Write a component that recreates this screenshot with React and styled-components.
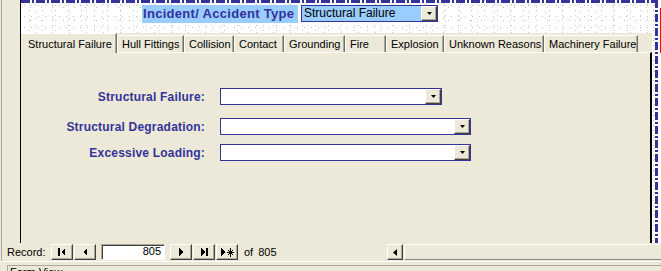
import styled, { createGlobalStyle } from "styled-components";

const BLUE = "#333399";
const FACE = "#ece9d8";

const GlobalStyle = createGlobalStyle`
  html, body { margin: 0; padding: 0; background: ${FACE}; }
  * { box-sizing: border-box; }
`;

// white paper with scattered grey dots (Access form header texture)
const dots = `
  radial-gradient(circle, #c4c4c4 0.7px, transparent 0.9px) 0 0 / 7px 11px,
  radial-gradient(circle, #cacaca 0.7px, transparent 0.9px) 2px 3px / 13px 5px,
  radial-gradient(circle, #bebebe 0.7px, transparent 0.9px) 4px 1px / 11px 13px,
  radial-gradient(circle, #c8c8c8 0.7px, transparent 0.9px) 6px 8px / 17px 7px,
  #fff
`;

const Window = styled.div`
  width: 661px;
  height: 271px;
  overflow: hidden;
  display: flex;
  flex-direction: column;
  background: ${FACE};
  font-family: "Liberation Sans", Arial, sans-serif;
  color: #000;
`;

const Workspace = styled.div`
  height: 261px;
  display: flex;
  flex-direction: column;
  background: linear-gradient(to right, transparent 1px, #aca899 1px 2px, transparent 2px);
`;

const FormRow = styled.div`
  height: 243px;
  display: flex;
  padding-left: 20px;
`;

const Form = styled.div`
  flex: 1;
  display: flex;
  border-left: 1px solid #000;
`;

const FormMain = styled.div`
  width: 634px;
  display: flex;
  flex-direction: column;
  background: ${dots};
`;

const Header = styled.div`
  height: 33px;
  display: flex;
  flex-direction: column;
`;

const DashH = styled.div`
  height: 3px;
  background: repeating-linear-gradient(to right, ${BLUE} 0 9px, transparent 9px 11px, ${BLUE} 11px 13px, transparent 13px 15px);
`;

const HeaderBody = styled.div`
  flex: 1;
  display: flex;
  align-items: flex-start;
  gap: 3px;
  padding: 2px 0 0 121px;
`;

const TypeLabel = styled.div`
  width: 156px;
  height: 18px;
  line-height: 18px;
  padding-left: 1px;
  overflow: hidden;
  background: #99ccff;
  color: ${BLUE};
  font-weight: bold;
  font-size: 13px;
  letter-spacing: 0.3px;
  white-space: nowrap;
`;

const Combo = styled.div`
  width: ${(p) => p.$width}px;
  height: 17px;
  display: flex;
  align-items: stretch;
  border: 1px solid ${BLUE};
  background: ${(p) => p.$bg || "#fff"};
`;

const ComboValue = styled.div`
  flex: 1;
  padding-left: 2px;
  font-size: 12px;
  line-height: 15px;
  white-space: nowrap;
  overflow: hidden;
`;

const DropButton = styled.div`
  width: 16px;
  display: flex;
  align-items: center;
  justify-content: center;
  background: ${FACE};
  border-style: solid;
  border-width: 1px;
  border-color: #fff #404040 #404040 #fff;
  box-shadow: inset -1px -1px #aca899;
`;

const TabArea = styled.div`
  flex: 1;
  display: flex;
  flex-direction: column;
  margin-right: 3px;
  background: ${FACE};
`;

const TabStrip = styled.div`
  height: 19px;
  display: flex;
  align-items: flex-end;
`;

const Tab = styled.div`
  width: ${(p) => p.$width}px;
  height: ${(p) => (p.$active ? 20 : 17)}px;
  margin-bottom: ${(p) => (p.$active ? -1 : 0)}px;
  position: relative;
  z-index: ${(p) => (p.$active ? 1 : 0)};
  display: flex;
  align-items: center;
  padding-left: ${(p) => (p.$active ? 6 : 4)}px;
  background: ${FACE};
  font-size: 11px;
  white-space: nowrap;
  border-top: 1px solid #fff;
  border-left: 1px solid ${(p) => (p.$active ? FACE : "#fff")};
  border-right: 1px solid #716f64;
  box-shadow: inset -1px 0 #aca899;
`;

const Panel = styled.div`
  flex: 1;
  border-top: 1px solid #fff;
  border-right: 2px solid #000;
  padding-top: 35px;
  display: flex;
  flex-direction: column;
`;

const Field = styled.div`
  display: grid;
  grid-template-columns: 184px auto;
  column-gap: 15px;
  align-items: center;
  margin-top: ${(p) => p.$top || 0}px;
`;

const FieldLabel = styled.div`
  text-align: right;
  color: ${BLUE};
  font-weight: bold;
  font-size: 12px;
  letter-spacing: 0.2px;
  white-space: nowrap;
`;

const RightRail = styled.div`
  width: 6px;
  display: flex;
`;

const DashV = styled.div`
  width: 3px;
  background: repeating-linear-gradient(to bottom, ${BLUE} 0 8px, transparent 8px 10px, ${BLUE} 10px 12px, transparent 12px 14px), ${dots};
`;

const RailTail = styled.div`
  width: 3px;
  background: linear-gradient(#f00, #f00) 2px 8px / 1px 45px no-repeat, ${dots};
`;

const RecordBar = styled.div`
  height: 18px;
  display: flex;
  align-items: center;
  padding-left: 7px;
  font-size: 11px;
`;

const RecordLabel = styled.div`
  width: 44px;
`;

const NavGroup = styled.div`
  display: flex;
  align-items: center;
  gap: 1px;
`;

const NavButton = styled.div`
  width: 22px;
  height: 16px;
  display: flex;
  align-items: center;
  justify-content: center;
  background: ${FACE};
  border-style: solid;
  border-width: 1px;
  border-color: #fff #404040 #404040 #fff;
  box-shadow: inset -1px -1px #aca899;
`;

const RecordInput = styled.div`
  width: 64px;
  height: 16px;
  margin: 0 4px;
  padding-right: 3px;
  text-align: right;
  line-height: 13px;
  background: #fff;
  border-style: solid;
  border-width: 1px;
  border-color: #aca899 #fff #fff #aca899;
  box-shadow: inset 1px 1px #404040;
`;

const RecordCount = styled.div`
  margin-left: 6px;
  word-spacing: 2px;
`;

const ScrollBar = styled.div`
  margin-left: auto;
  width: 274px;
  height: 16px;
  display: flex;
  gap: 1px;
`;

const ScrollArrow = styled(NavButton)`
  width: 16px;
`;

const ScrollTrack = styled.div`
  flex: 1;
  border-top: 1px solid #fff;
  border-left: 1px solid #fff;
  border-bottom: 1px solid #8a877a;
`;

const StatusBar = styled.div`
  flex: 1;
  border-top: 1px solid #fff;
  padding: 3px 0 0 7px;
`;

const StatusPanel = styled.div`
  border-left: 1px solid #aca899;
  border-top: 1px solid #aca899;
  padding-left: 2px;
  font-size: 11px;
  line-height: 13px;
`;

const DownArrow = () => (
  <svg width="5" height="3" viewBox="0 0 5 3">
    <path d="M0 0 H5 L2.5 3 Z" fill="#000" />
  </svg>
);

const NavGlyph = ({ kind }) => {
  const shapes = {
    first: (
      <>
        <rect x="1" y="0" width="2" height="8" />
        <path d="M8 0 L4 4 L8 8 Z" />
      </>
    ),
    prev: <path d="M7 0 L3 4 L7 8 Z" />,
    next: <path d="M3 0 L7 4 L3 8 Z" />,
    last: (
      <>
        <path d="M2 0 L6 4 L2 8 Z" />
        <rect x="7" y="0" width="2" height="8" />
      </>
    ),
  };
  if (kind === "new") {
    return (
      <svg width="14" height="9" viewBox="0 0 14 9" shapeRendering="crispEdges">
        <path d="M1 0 L5 4 L1 8 Z" fill="#000" />
        <g stroke="#000" strokeWidth="1">
          <line x1="10.5" y1="0" x2="10.5" y2="9" />
          <line x1="7" y1="4.5" x2="14" y2="4.5" />
          <line x1="8" y1="2" x2="13" y2="7" />
          <line x1="13" y1="2" x2="8" y2="7" />
        </g>
      </svg>
    );
  }
  return (
    <svg width="10" height="8" viewBox="0 0 10 8" fill="#000" shapeRendering="crispEdges">
      {shapes[kind]}
    </svg>
  );
};

const tabs = [
  ["Structural Failure", 96],
  ["Hull Fittings", 67],
  ["Collision", 50],
  ["Contact", 50],
  ["Grounding", 61],
  ["Fire", 41],
  ["Explosion", 58],
  ["Unknown Reasons", 100],
  ["Machinery Failure", 94],
];

const fields = [
  { label: "Structural Failure:", width: 222, top: 0 },
  { label: "Structural Degradation:", width: 251, top: 13 },
  { label: "Excessive Loading:", width: 251, top: 9 },
];

export default function App() {
  return (
    <Window>
      <GlobalStyle />
      <Workspace>
        <FormRow>
          <Form>
            <FormMain>
              <Header>
                <DashH />
                <HeaderBody>
                  <TypeLabel>Incident/ Accident Type</TypeLabel>
                  <Combo $width={137} $bg="#99ccff">
                    <ComboValue>Structural Failure</ComboValue>
                    <DropButton>
                      <DownArrow />
                    </DropButton>
                  </Combo>
                </HeaderBody>
              </Header>
              <TabArea>
                <TabStrip>
                  {tabs.map(([name, w], i) => (
                    <Tab key={name} $width={w} $active={i === 0}>
                      {name}
                    </Tab>
                  ))}
                </TabStrip>
                <Panel>
                  {fields.map((f) => (
                    <Field key={f.label} $top={f.top}>
                      <FieldLabel>{f.label}</FieldLabel>
                      <Combo $width={f.width}>
                        <ComboValue />
                        <DropButton>
                          <DownArrow />
                        </DropButton>
                      </Combo>
                    </Field>
                  ))}
                </Panel>
              </TabArea>
            </FormMain>
            <RightRail>
              <DashV />
              <RailTail />
            </RightRail>
          </Form>
        </FormRow>
        <RecordBar>
          <RecordLabel>Record:</RecordLabel>
          <NavGroup>
            <NavButton><NavGlyph kind="first" /></NavButton>
            <NavButton><NavGlyph kind="prev" /></NavButton>
            <RecordInput>805</RecordInput>
            <NavButton><NavGlyph kind="next" /></NavButton>
            <NavButton><NavGlyph kind="last" /></NavButton>
            <NavButton><NavGlyph kind="new" /></NavButton>
          </NavGroup>
          <RecordCount>of 805</RecordCount>
          <ScrollBar>
            <ScrollArrow>
              <svg width="4" height="7" viewBox="0 0 4 7">
                <path d="M4 0 L0 3.5 L4 7 Z" fill="#000" />
              </svg>
            </ScrollArrow>
            <ScrollTrack />
          </ScrollBar>
        </RecordBar>
      </Workspace>
      <StatusBar>
        <StatusPanel>Form View</StatusPanel>
      </StatusBar>
    </Window>
  );
}
